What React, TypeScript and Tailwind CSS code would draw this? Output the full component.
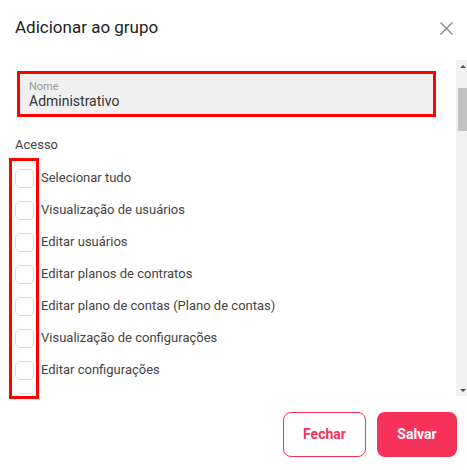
const items = [
  'Selecionar tudo',
  'Visualização de usuários',
  'Editar usuários',
  'Editar planos de contratos',
  'Editar plano de contas (Plano de contas)',
  'Visualização de configurações',
  'Editar configurações',
  '',
];

const App = () => {
  return (
    <div className="relative w-[467px] h-[470px] bg-white flex flex-col font-['Roboto',sans-serif] overflow-hidden">
      {/* Header */}
      <div className="h-[60px] flex items-center justify-between pl-[15px] pr-[13px] pb-[4px]">
        <h1 className="text-[17px] text-[#222]">Adicionar ao grupo</h1>
        <button className="w-[16px] h-[16px] flex items-center justify-center">
          <svg width="13" height="13" viewBox="0 0 13 13">
            <path d="M0.5 0.5 L12.5 12.5 M12.5 0.5 L0.5 12.5" stroke="#8a8a8a" strokeWidth="1.4" />
          </svg>
        </button>
      </div>

      {/* Body */}
      <div className="flex h-[336px]">
        <div className="flex-1 overflow-hidden pl-[15px] pr-[20px] pt-[11px]">
          <div className="ml-[2px] border-[3px] border-[#ff0000] bg-[#f0f0f0] h-[46px] px-[9px] pt-[6px]">
            <div className="text-[11px] leading-[13px] text-[#9a9a9a]">Nome</div>
            <div className="text-[14px] leading-[17px] text-[#333]">Administrativo</div>
          </div>
          <div className="mt-[18px] h-5 text-[13px] leading-5 text-[#444]">Acesso</div>
          <div className="mt-[7px] flex flex-col">
            {items.map((label, i) => (
              <label key={i} className="h-8 flex items-center gap-[7px] text-[13px] text-[#444]">
                <span className="w-[19px] h-[19px] rounded-[5px] border border-[#d9d9d9] bg-white shrink-0" />
                {label && <span>{label}</span>}
              </label>
            ))}
          </div>
        </div>
        {/* Scrollbar */}
        <div className="w-[11px] bg-[#f1f1f1] flex flex-col items-end">
          <div className="h-[12px] w-full flex items-center justify-center pl-[2px]">
            <span className="w-0 h-0 border-l-[3px] border-r-[3px] border-b-[3px] border-l-transparent border-r-transparent border-b-[#505050]" />
          </div>
          <div className="mt-[16px] w-[9px] h-[43px] bg-[#c1c1c1]" />
          <div className="flex-1" />
          <div className="h-[12px] w-full flex items-center justify-center pl-[2px]">
            <span className="w-0 h-0 border-l-[3px] border-r-[3px] border-t-[3px] border-l-transparent border-r-transparent border-t-[#505050]" />
          </div>
        </div>
      </div>

      {/* Footer */}
      <div className="flex justify-end gap-[11px] pr-[10px] pt-[16px]">
        <button className="w-[83px] h-[45px] rounded-[8px] border border-[#f7325a] text-[#f7325a] text-[14px] font-bold">
          Fechar
        </button>
        <button className="w-[80px] h-[45px] rounded-[8px] bg-[#f7325a] text-white text-[14px] font-bold">
          Salvar
        </button>
      </div>

      {/* Highlight overlay around checkbox column */}
      <div className="absolute left-[9px] top-[158px] w-[30px] h-[241px] border-[3px] border-[#ff0000] pointer-events-none" />
    </div>
  );
};

export default App;
